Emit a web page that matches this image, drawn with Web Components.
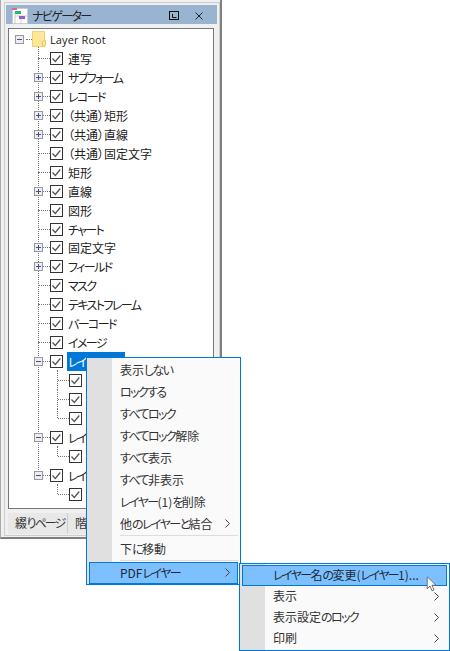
<!DOCTYPE html>
<html>
<head>
<meta charset="utf-8">
<style>
html,body{margin:0;padding:0;background:#fff;}
body{width:450px;height:651px;overflow:hidden;font-family:"Noto Sans CJK JP","Liberation Sans",sans-serif;font-feature-settings:"palt";font-size:12px;}
</style>
</head>
<body>
<nav-panel></nav-panel>
<script>
const CHECK = `<svg width="13" height="13" viewBox="0 0 13 13" style="display:block;flex:none;position:relative"><rect x=".5" y=".5" width="12" height="12" fill="#fff" stroke="#333"/><path d="M2.5 6.5l2.8 3 5-6" fill="none" stroke="#555" stroke-width="1.3"/></svg>`
const SIGN = (kind) => `<svg width="9" height="9" viewBox="0 0 9 9" style="display:block"><rect x=".5" y=".5" width="8" height="8" fill="#eee" stroke="#999"/><path d="M2 4.5h5${kind=='plus'?'M4.5 2v5':''}" stroke="#3a50a8"/></svg>`
// kana is much narrower in the reference font
const k = (text) => text.replace(/[ぁ-ゖァ-ヺー]+/g, m => `<span class="k">${m}</span>`)

class TreeRow extends HTMLElement{
    constructor(){
        super()
        const lvl = +this.getAttribute('level') || 1
        const exp = this.getAttribute('expander')
        const sel = this.hasAttribute('selected')
        const last = this.hasAttribute('last')
        this._shadowRoot = this.attachShadow({mode:'open'})
        this._shadowRoot.innerHTML = `
    <style>
        :host{display:flex;align-items:center;height:18.96px;box-sizing:border-box;padding-left:${lvl==2?60:41}px;position:relative;color:#222;}
        .exp{position:absolute;left:25px;top:5px;}
        .h{position:absolute;left:${lvl==2?49:29}px;top:9px;width:${lvl==2?11:12}px;border-top:1px dotted #777;}
        .v{position:absolute;left:48px;top:-1px;height:${last?10:20}px;border-left:1px dotted #777;}
        .label{margin-left:4px;padding-left:1px;white-space:nowrap;line-height:19px;height:19px;box-sizing:border-box;}
        .sel{background:#0078d7;color:#fff;width:58px;overflow:hidden;}
    </style>
    <span class="h"></span>${lvl==2?'<span class="v"></span>':''}${exp?`<span class="exp">${SIGN(exp)}</span>`:''}${CHECK}<span class="label ${sel?'sel':''}"><slot></slot></span>`
    }
}
customElements.define('tree-row',TreeRow)

class MenuItem extends HTMLElement{
    constructor(){
        super()
        const arrow = this.hasAttribute('arrow')
        this._shadowRoot = this.attachShadow({mode:'open'})
        this._shadowRoot.innerHTML = `
    <style>
        :host{display:flex;align-items:center;height:var(--row,22px);box-sizing:border-box;color:#333;position:relative;white-space:nowrap;padding:0 0 2px 31px;}
        :host([active]){background:#7dc0ff;outline:1px solid #0078d7;outline-offset:-1px;color:#1c2a38;}
        svg{position:absolute;right:8px;top:6px;}
    </style>
    <slot></slot>${arrow?'<svg width="5" height="9" viewBox="0 0 5 9"><path d="M.5.5l4 4-4 4" fill="none" stroke="#444"/></svg>':''}`
    }
}
customElements.define('menu-item',MenuItem)

class PopMenu extends HTMLElement{
    constructor(){
        super()
        this._shadowRoot = this.attachShadow({mode:'open'})
        this._shadowRoot.innerHTML = `
    <style>
        :host{display:block;position:absolute;box-sizing:border-box;border:1px solid #0078d7;background:#fafafa;}
        .g{position:absolute;left:0;top:0;bottom:0;width:25px;background:#e0e0e0;}
        .in{position:relative;padding:1px 2px;}
    </style>
    <div class="g"></div><div class="in"><slot></slot></div>`
    }
}
customElements.define('pop-menu',PopMenu)

class NavPanel extends HTMLElement{
    constructor(){
        super()
        this._shadowRoot = this.attachShadow({mode:'open'})
        const rows = [
          [1,'','連写'],[1,'plus','サブフォーム'],[1,'plus','レコード'],[1,'plus','（共通）矩形'],[1,'plus','（共通）直線'],
          [1,'','（共通）固定文字'],[1,'','矩形'],[1,'plus','直線'],[1,'','図形'],[1,'','チャート'],[1,'plus','固定文字'],
          [1,'plus','フィールド'],[1,'','マスク'],[1,'','テキストフレーム'],[1,'','バーコード'],[1,'','イメージ'],
          [1,'minus','レイヤー(1)','selected'],[2,'',''],[2,'',''],[2,'','','last'],[1,'minus','レイヤー(2)'],[2,'','','last'],[1,'minus','レイヤー(3)'],[2,'','','last']
        ].map(r=>`<tree-row level="${r[0]}" ${r[1]?`expander="${r[1]}"`:''} ${r[3]||''}>${k(r[2])}</tree-row>`).join('')
        const item = (t, attrs='') => `<menu-item ${attrs}>${k(t)}</menu-item>`
        this._shadowRoot.innerHTML = `
    <style>
        :host{display:block;width:450px;height:651px;position:relative;}
        .k{letter-spacing:-1.6px;}
        #win{width:222px;height:539px;box-sizing:border-box;background:#f0f0f0;border-left:1px solid #aaa;border-right:2px solid #808080;border-bottom:2px solid #808080;padding:2px 0 1px 3px;}
        #inner{height:100%;box-sizing:border-box;border:1px solid #ccc;padding:2px 2px 1px 1px;display:flex;flex-direction:column;}
        #title{height:19px;box-sizing:border-box;padding:2px 0 0 6px;background:#99b4d1;display:flex;align-items:center;color:#222;gap:4px;flex:none;}
        #title .t{flex:1}
        #tree{margin:4px 3px 0 2px;height:481px;box-sizing:border-box;border:1px solid #777;background:#fff;padding-top:1px;position:relative;overflow:hidden;flex:none;}
        .root{display:flex;align-items:center;height:18.96px;color:#222;padding-left:6px;position:relative;}
        .root .dots{width:6px;margin:0 2px;border-top:1px dotted #777;}
        .root span.n{margin-left:4px;font:11px "Open Sans","Liberation Sans",sans-serif;letter-spacing:.1px;}
        .vl{position:absolute;left:29px;top:18px;height:425px;border-left:1px dotted #777;}
        #tabs{display:flex;height:21px;margin:4px 0 0 2px;color:#333;flex:none;}
        #tabs div{padding:0 4px 0 7px;background:#e8e8e8;border-right:1px solid #ccc;line-height:20px;white-space:nowrap;}
        #tabs div:first-child{width:60px;box-sizing:border-box;letter-spacing:-.5px;}
        #tabs div:first-child .k{letter-spacing:-1.9px;}
    </style>
    <div id="win"><div id="inner">
      <div id="title">
        <svg width="16" height="16" viewBox="0 0 16 16"><rect x=".5" y=".5" width="15" height="15" fill="#fff" stroke="#ccc"/><path d="M3 4v11M3 8h12M9 8v7" stroke="#ccc"/><rect x="0" y="0" width="5" height="2" fill="#e0609a"/><rect x="3" y="3" width="6" height="3" fill="#20c060"/><rect x="7" y="8" width="6" height="3" fill="#9060d0"/></svg>
        <span class="t">${k('ナビゲーター')}</span>
        <svg width="10" height="9" viewBox="0 0 10 9" style="margin-right:12px"><rect x=".5" y=".5" width="9" height="8" fill="none" stroke="#111"/><path d="M3.5 3v3.5h4" fill="none" stroke="#111"/></svg>
        <svg width="8" height="8" viewBox="0 0 8 8" style="margin-right:14px"><path d="M.5.5l7 7M7.5.5l-7 7" stroke="#222"/></svg>
      </div>
      <div id="tree">
        <div class="vl"></div>
        <div class="root">
          ${SIGN('minus')}<span class="dots"></span>
          <svg width="14" height="16" viewBox="0 0 14 16" style="margin-left:-2px;position:relative"><path d="M.5.5h12v15H.5z" fill="#ffe79a" stroke="#f0d070"/><path d="M10.5 15.5v-5l3-1v5z" fill="#ffe79a" stroke="#e8c860"/></svg>
          <span class="n">Layer Root</span>
        </div>
        ${rows}
      </div>
      <div id="tabs"><div>${k('綴りページ')}</div><div>階層</div></div>
    </div></div>
    <pop-menu style="left:86px;top:357px;width:155px;height:228px;">
      ${item('表示しない')}${item('ロックする')}${item('すべてロック')}
      ${item('すべてロック解除')}${item('すべて表示')}${item('すべて非表示')}
      ${item('レイヤー(1)を削除')}${item('他のレイヤーと結合','arrow')}
      <div style="height:1px;background:#ddd;margin:0 0 2px 31px"></div>
      ${item('下に移動')}
      <div style="height:1px;background:#ddd;margin:0 0 1px 31px"></div>
      ${item('PDFレイヤー','arrow active')}
    </pop-menu>
    <pop-menu style="left:239px;top:563px;width:211px;height:88px;--row:21px;">
      ${item('レイヤー名の変更(レイヤー1)...','active')}
      ${item('表示','arrow')}${item('表示設定のロック','arrow')}${item('印刷','arrow')}
    </pop-menu>
    <svg width="12" height="16" viewBox="0 0 14 20" style="position:absolute;left:426px;top:576px"><path d="M1 1v15l3.5-3.5 2.5 6 2.5-1-2.5-6h5z" fill="#fff" stroke="#555"/></svg>`
    }
}
customElements.define('nav-panel',NavPanel)
</script>
</body>
</html>
